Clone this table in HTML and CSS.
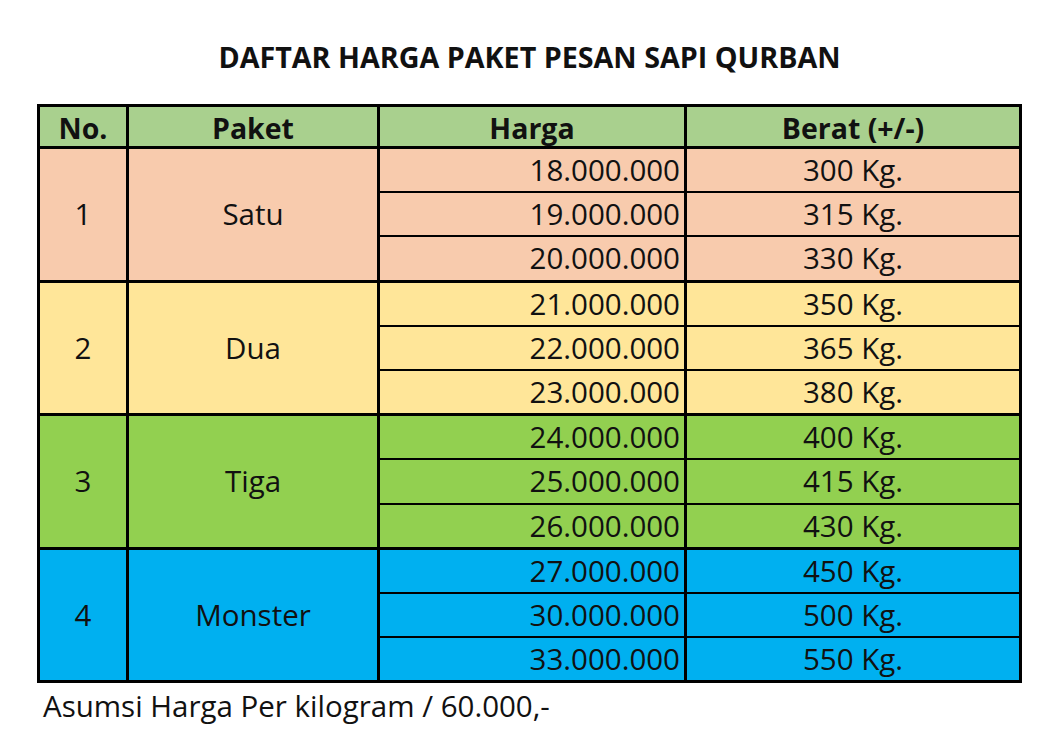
FILE: index.html
```html
<!DOCTYPE html>
<html lang="id">
<head>
<meta charset="utf-8">
<title>Daftar Harga Paket Pesan Sapi Qurban</title>
<link rel="stylesheet" href="styles.css">
</head>
<body>
<div class="page">
  <h1 class="title">DAFTAR HARGA PAKET PESAN SAPI QURBAN</h1>
  <table class="price-table">
    <colgroup>
      <col class="c-no">
      <col class="c-paket">
      <col class="c-harga">
      <col class="c-berat">
    </colgroup>
    <thead>
      <tr><th>No.</th><th>Paket</th><th>Harga</th><th>Berat (+/-)</th></tr>
    </thead>
    <tbody class="grp satu">
      <tr><td rowspan="3" class="no">1</td><td rowspan="3" class="paket">Satu</td><td class="harga">18.000.000</td><td class="berat">300 Kg.</td></tr>
      <tr><td class="harga">19.000.000</td><td class="berat">315 Kg.</td></tr>
      <tr><td class="harga">20.000.000</td><td class="berat">330 Kg.</td></tr>
    </tbody>
    <tbody class="grp dua">
      <tr><td rowspan="3" class="no">2</td><td rowspan="3" class="paket">Dua</td><td class="harga">21.000.000</td><td class="berat">350 Kg.</td></tr>
      <tr><td class="harga">22.000.000</td><td class="berat">365 Kg.</td></tr>
      <tr><td class="harga">23.000.000</td><td class="berat">380 Kg.</td></tr>
    </tbody>
    <tbody class="grp tiga">
      <tr><td rowspan="3" class="no">3</td><td rowspan="3" class="paket">Tiga</td><td class="harga">24.000.000</td><td class="berat">400 Kg.</td></tr>
      <tr><td class="harga">25.000.000</td><td class="berat">415 Kg.</td></tr>
      <tr><td class="harga">26.000.000</td><td class="berat">430 Kg.</td></tr>
    </tbody>
    <tbody class="grp monster">
      <tr><td rowspan="3" class="no">4</td><td rowspan="3" class="paket">Monster</td><td class="harga">27.000.000</td><td class="berat">450 Kg.</td></tr>
      <tr><td class="harga">30.000.000</td><td class="berat">500 Kg.</td></tr>
      <tr><td class="harga">33.000.000</td><td class="berat">550 Kg.</td></tr>
    </tbody>
  </table>
  <p class="note">Asumsi Harga Per kilogram / 60.000,-</p>
</div>
</body>
</html>
```
FILE: styles.css
```css
html, body {
  margin: 0;
  padding: 0;
  background: #ffffff;
}

body {
  font-family: "Open Sans", "DejaVu Sans", sans-serif;
  color: #111111;
}

.page {
  width: 985px;
  margin-left: 37px;
  padding-top: 38px;
}

.title {
  margin: 0 0 28px 0;
  font-size: 28.7px;
  line-height: 38px;
  font-weight: 700;
  text-align: center;
  color: #111111;
}

.price-table {
  width: 985px;
  table-layout: fixed;
  border-collapse: collapse;
  border: 3px solid #000;
}

.c-no { width: 89px; }
.c-paket { width: 251px; }
.c-harga { width: 307px; }
.c-berat { width: 335px; }

.price-table th,
.price-table td {
  border: 3px solid #000;
  padding: 0;
}

.price-table th {
  height: 37px;
  line-height: 34px;
  background: #a9d08e;
  font-size: 28.5px;
  font-weight: 700;
  text-align: center;
  vertical-align: middle;
  padding-top: 2px;
}

.price-table td {
  height: 42.2px;
  line-height: 38px;
  font-size: 29.5px;
  font-weight: 400;
  vertical-align: middle;
}

.price-table td.harga,
.price-table td.berat {
  border-top-width: 2px;
  border-bottom-width: 2px;
}

.grp {
  border: 3px solid #000;
}

.no,
.paket,
.berat {
  text-align: center;
}

.price-table td.harga {
  text-align: right;
  padding-right: 4px;
}

.satu td { background: #f8cbad; }
.dua td { background: #ffe699; }
.tiga td { background: #92d050; }
.monster td { background: #00b0f0; }

.note {
  margin: 3px 0 0 6px;
  font-size: 29.5px;
  line-height: 40px;
  color: #111111;
}
```
